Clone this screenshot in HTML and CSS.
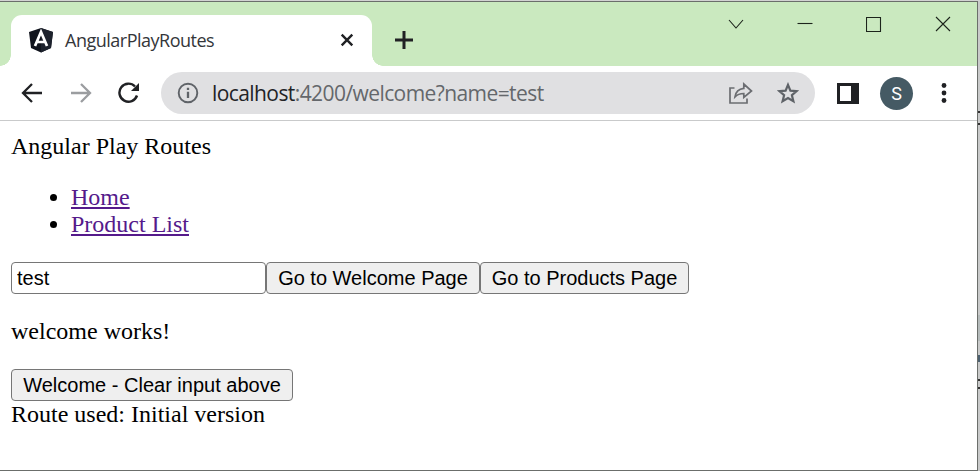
FILE: index.html
```html
<!DOCTYPE html>
<html lang="en">
<head>
<meta charset="utf-8">
<title>AngularPlayRoutes</title>
<link rel="stylesheet" href="styles.css">
</head>
<body>
<div class="desktop">
<div class="window">
  <header class="tabstrip">
    <div class="tab">
      <svg class="logo" width="26" height="26" viewBox="0 0 26 26"><path d="M13 1 25 5l-2 16-10 4.500L3 21 1 5z" fill="#10141d"/><path d="M13 1 25 5l-2 16-10 4.500z" fill="#1d222d"/><path d="m7 19 6-14 6 14M9.300 15h7.400" fill="none" stroke="#fff" stroke-width="2.700"/></svg>
      <span class="tab-title">AngularPlayRoutes</span>
      <svg class="tab-close" width="14" height="14" viewBox="0 0 14 14"><path d="m1.700 1.700 10.600 10.600M12.300 1.700 1.700 12.300" stroke="#202124" stroke-width="2.400"/></svg>
    </div>
    <svg class="new-tab" width="18" height="18" viewBox="0 0 18 18"><path d="M9 0v18M0 9h18" stroke="#202124" stroke-width="3"/></svg>
    <div class="controls">
      <svg width="16" height="16" viewBox="0 0 16 16"><path d="m1 4 7 8 7-8"/></svg>
      <svg width="16" height="16" viewBox="0 0 16 16"><path d="M.5 7.500h15"/></svg>
      <svg width="16" height="16" viewBox="0 0 16 16"><path d="M1 1h14v14H1z" transform="translate(-.5 .5)"/></svg>
      <svg width="16" height="16" viewBox="0 0 16 16"><path d="m1 1 14 14M15 1 1 15"/></svg>
    </div>
  </header>
  <nav class="toolbar">
    <svg class="back" width="22" height="20" viewBox="0 0 22 20"><path d="M21 10H2M11 1l-9 9 9 9" fill="none" stroke="#202124" stroke-width="2.300"/></svg>
    <svg class="forward" width="22" height="20" viewBox="0 0 22 20"><path d="M1 10h19M11 1l9 9-9 9" fill="none" stroke="#9b9da0" stroke-width="2.300"/></svg>
    <svg class="reload" width="22" height="22" viewBox="0 0 22 22"><path d="M17 4.500A9 9 0 1 0 19 13.500" fill="none" stroke="#202124" stroke-width="2.400"/><path d="M21 1v8h-8z" fill="#202124"/></svg>
    <div class="address">
      <svg class="info" width="22" height="22" viewBox="0 0 22 22"><circle cx="11" cy="11" r="9.300" fill="none" stroke="#5f6368" stroke-width="1.900"/><path d="M11 9.700V16M11 5.800v2.300" stroke="#5f6368" stroke-width="2.300"/></svg>
      <span class="url"><span class="host">localhost</span>:4200/welcome?name=test</span>
      <svg class="share" width="24" height="22" viewBox="0 0 24 22"><path d="M5.500 6H1v15h17V16.500M6 14.800c.7-4.700 3.500-7.800 8.800-8.400V2l7.700 7-7.700 6.500v-4c-4 0-6.600 1-8.800 3.300z" fill="none" stroke="#6b6d71" stroke-width="1.700"/></svg>
      <svg class="star" width="22" height="22" viewBox="0 0 22 22"><path d="m11 2.800 2.400 5.800 6.300.5-4.800 4.100 1.500 6.100-5.400-3.200-5.400 3.200 1.500-6.100L2.300 9.100l6.300-.5z" fill="none" stroke="#5f6368" stroke-width="2.200"/></svg>
    </div>
    <svg class="panel" width="22" height="21" viewBox="0 0 22 21"><path d="M0 0h22v21H0z" fill="#202124"/><path d="M3 3h11v15H3z" fill="#fff"/></svg>
    <span class="avatar">S</span>
    <svg class="menu" width="6" height="20" viewBox="0 0 6 20"><g fill="#202124"><circle cx="3" cy="2.500" r="2.400"/><circle cx="3" cy="10" r="2.400"/><circle cx="3" cy="17.500" r="2.400"/></g></svg>
  </nav>
  <main class="page">
    <div>Angular Play Routes</div>
    <ul>
      <li><a href="#">Home</a></li>
      <li><a href="#">Product List</a></li>
    </ul>
    <div class="form-row"><input class="name" type="text" value="test"><button class="go-welcome">Go to Welcome Page</button><button class="go-products">Go to Products Page</button></div>
    <p>welcome works!</p>
    <button class="clear">Welcome - Clear input above</button>
    <div>Route used: Initial version</div>
  </main>
</div>
<div class="edge"><i class="e1"></i><i class="e2"></i><i class="e3"></i><i class="e4"></i><i class="e5"></i><i class="e6"></i></div>
</div>
</body>
</html>
```
FILE: styles.css
```css
* { box-sizing: border-box; }
body { margin: 0; background: #d2d3d2; overflow: hidden; }
svg { display: block; flex: none; }
.desktop { display: flex; width: 980px; height: 471px; padding-top: 1px; }
.window {
  display: flex; flex-direction: column; width: 978px; height: 470px;
  background: #fff; border: solid #6b6e6b; border-width: 1px 1px 1px 0;
}
.tabstrip {
  display: flex; height: 64px; padding: 13px 26px 0 11px; background: #cae9bf;
}
.tab {
  position: relative; display: flex; align-items: center; width: 361px; height: 51px;
  padding: 0 18px 0 17px; background: #fff; border-radius: 11px 11px 0 0;
}
.tab::before, .tab::after {
  content: ""; position: absolute; bottom: 0; width: 11px; height: 11px;
}
.tab::before { left: -11px; background: radial-gradient(circle at 0 0, #cae9bf 10.5px, #fff 11px); }
.tab::after { right: -11px; background: radial-gradient(circle at 100% 0, #cae9bf 10.5px, #fff 11px); }
.tab-title {
  margin-left: 11px; font: 18px/24px "Open Sans", sans-serif; color: #34363a;
  letter-spacing: -0.5px; white-space: nowrap;
}
.logo, .tab-title { position: relative; top: -1px; }
.tab-close { margin-left: auto; position: relative; top: -1px; }
.new-tab { margin: 16px 0 0 23px; }
.controls { display: flex; gap: 53px; margin-left: auto; padding-top: 1px; }
.controls path { fill: none; stroke: #1c241b; stroke-width: 1.1; }
.toolbar {
  display: flex; align-items: center; height: 55px; padding: 0 30px 0 21px;
  border-bottom: 1px solid #c9cacb; flex: none;
}
.forward { margin-left: 27px; }
.reload { margin-left: 26px; }
.address {
  display: flex; align-items: center; width: 654px; height: 42px; margin-left: 21px;
  padding: 0 16px; background: #e0e0e2; border-radius: 21px;
}
.url {
  margin-left: 13px; font: 21px/30px "Open Sans", sans-serif; color: #64676b;
  white-space: nowrap; letter-spacing: -0.58px;
}
.host { color: #222326; }
.share { margin-left: auto; }
.star { margin-left: 24px; }
.panel { margin-left: 22px; }
.avatar {
  width: 33px; height: 33px; margin-left: 21px; border-radius: 50%; background: #455a64;
  color: #fff; font: 18px/33px Roboto, sans-serif; text-align: center;
}
.menu { margin-left: auto; }
.page {
  padding: 12px 11px 0; font: 24px/27px "Liberation Serif", serif; color: #000;
}
ul { margin: 24px 0; padding-left: 60px; }
a { color: #551a8b; text-decoration-thickness: 2px; text-underline-offset: 2px; }
p { margin: 24px 0; }
.form-row { display: flex; }
input, button {
  height: 32px; margin: 0; border: 1px solid #767676; border-radius: 4px;
  font: 20px/28px "Liberation Sans", sans-serif; color: #000; white-space: nowrap;
}
input { width: 255px; padding: 0 5px; background: #fff; }
button { display: block; padding: 0; background: #efefef; text-align: center; }
.go-welcome { width: 214px; }
.go-products { width: 209px; }
.clear { width: 282px; }
.edge { position: relative; width: 2px; height: 470px; background: #c9caca; }
.edge i { position: absolute; left: 0; width: 2px; }
.e1 { top: 110px; height: 2px; background: #333; }
.e2 { top: 122px; height: 2px; background: #333; }
.e3 { top: 314px; height: 26px; background: #b5bbbb; }
.e4 { top: 354px; height: 7px; background: #4c6070; }
.e5 { top: 378px; height: 2px; background: #333; }
.e6 { top: 386px; height: 2px; background: #333; }
```
